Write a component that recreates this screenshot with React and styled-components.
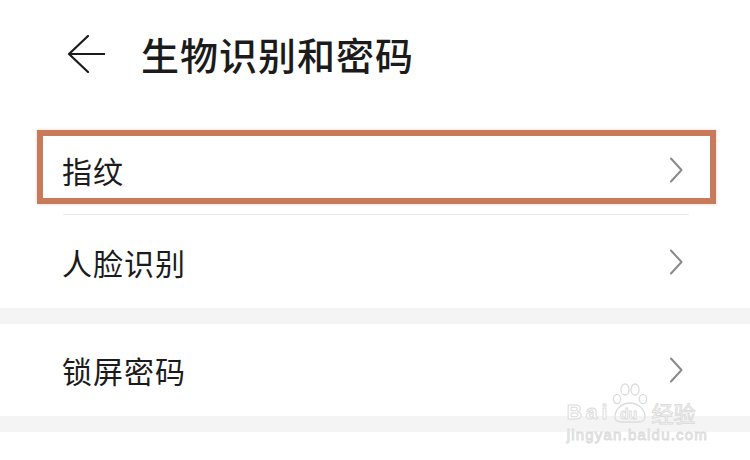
import styled, { createGlobalStyle } from "styled-components";

const GlobalStyle = createGlobalStyle`
  html, body {
    margin: 0;
    padding: 0;
    background: #ffffff;
  }
  body {
    font-family: "Noto Sans CJK SC", "Noto Sans", sans-serif;
    color: #1b1b1b;
  }
`;

const Page = styled.div`
  position: relative;
  width: 750px;
  height: 460px;
  overflow: hidden;
  background: #fff;
`;

const Header = styled.header`
  display: flex;
  align-items: center;
  gap: 36px;
  height: 124px;
  box-sizing: border-box;
  padding: 0 0 16px 67px;
`;

const BackButton = styled.button`
  display: flex;
  padding: 0;
  border: 0;
  background: none;
  color: #1b1b1b;
`;

const Title = styled.h1`
  margin: 0;
  font-size: 38px;
  font-weight: 500;
  letter-spacing: 1px;
  line-height: 1;
`;

const Group = styled.section`
  background: #fff;
`;

const Band = styled.div`
  height: 16px;
  background: #f4f4f4;
`;

const Row = styled.div`
  position: relative;
  display: flex;
  align-items: center;
  justify-content: space-between;
  height: ${(p) => p.$height || 92}px;
  padding: 0 67px 0 62px;

  ${(p) =>
    p.$divider &&
    `
    &::after {
      content: "";
      position: absolute;
      left: 63px;
      right: 61px;
      bottom: 1px;
      height: 1px;
      background: #ececec;
    }
  `}
`;

const Label = styled.span`
  font-size: 30px;
  letter-spacing: 1px;
  line-height: 1;
`;

const Highlight = styled.div`
  position: absolute;
  top: 6px;
  left: 37px;
  right: 34px;
  bottom: 12px;
  border: 6px solid #c97a5b;
  box-shadow: 0 0 3px rgba(201, 122, 91, 0.35);
  pointer-events: none;
`;

const Watermark = styled.div`
  position: absolute;
  right: 42px;
  bottom: 17px;
  display: flex;
  flex-direction: column;
  align-items: flex-start;
  color: #fff;
  -webkit-text-stroke: 1px #dcdcdc;
  font-family: "Liberation Sans", sans-serif;
  pointer-events: none;
`;

const MarkTop = styled.div`
  display: flex;
  align-items: flex-end;
  line-height: 1;
`;

const MarkLatin = styled.span`
  font-size: 21px;
  font-weight: 700;
  letter-spacing: 4px;
  margin-bottom: 1px;
`;

const MarkCn = styled.span`
  font-family: "Noto Sans CJK SC", sans-serif;
  font-size: 22px;
  margin-left: 2px;
`;

const MarkUrl = styled.div`
  font-size: 15px;
  letter-spacing: 1.2px;
  margin-top: 3px;
`;

const ArrowLeft = () => (
  <svg width="38" height="38" viewBox="0 0 38 38" fill="none">
    <path
      d="M38 19H2M21 1L2 19l19 18"
      stroke="currentColor"
      strokeWidth="2.2"
      strokeLinecap="round"
      strokeLinejoin="round"
    />
  </svg>
);

const Chevron = () => (
  <svg width="14" height="26" viewBox="0 0 14 26" fill="none">
    <path
      d="M2 1.5L12.5 13 2 24.5"
      stroke="#8a8a8a"
      strokeWidth="2"
      strokeLinecap="round"
      strokeLinejoin="round"
    />
  </svg>
);

const Paw = () => (
  <svg width="38" height="40" viewBox="0 0 38 40" fill="none" stroke="#dcdcdc" strokeWidth="1.3">
    <ellipse cx="14" cy="6.5" rx="4" ry="5.5" />
    <ellipse cx="24" cy="6.5" rx="4" ry="5.5" />
    <ellipse cx="6" cy="16" rx="3.6" ry="4.6" />
    <ellipse cx="32" cy="16" rx="3.6" ry="4.6" />
    <path d="M4 34c0-8 7-14 15-14s15 6 15 14c0 4-3 5-7 5H11c-4 0-7-1-7-5z" />
    <text x="9" y="36" fontSize="14" fontFamily="Liberation Sans" fill="#fff" stroke="#dcdcdc" strokeWidth="0.9" fontWeight="700">du</text>
  </svg>
);

const items = [
  { label: "指纹", highlight: true, divider: true },
  { label: "人脸识别" },
];

export default function App() {
  return (
    <>
      <GlobalStyle />
      <Page>
        <Header>
          <BackButton aria-label="返回">
            <ArrowLeft />
          </BackButton>
          <Title>生物识别和密码</Title>
        </Header>
        <Group>
          {items.map((item) => (
            <Row key={item.label} $divider={item.divider}>
              <Label>{item.label}</Label>
              <Chevron />
              {item.highlight && <Highlight />}
            </Row>
          ))}
        </Group>
        <Band />
        <Group>
          <Row>
            <Label>锁屏密码</Label>
            <Chevron />
          </Row>
        </Group>
        <Band />
        <Watermark>
          <MarkTop>
            <MarkLatin>Bai</MarkLatin>
            <Paw />
            <MarkCn>经验</MarkCn>
          </MarkTop>
          <MarkUrl>jingyan.baidu.com</MarkUrl>
        </Watermark>
      </Page>
    </>
  );
}
